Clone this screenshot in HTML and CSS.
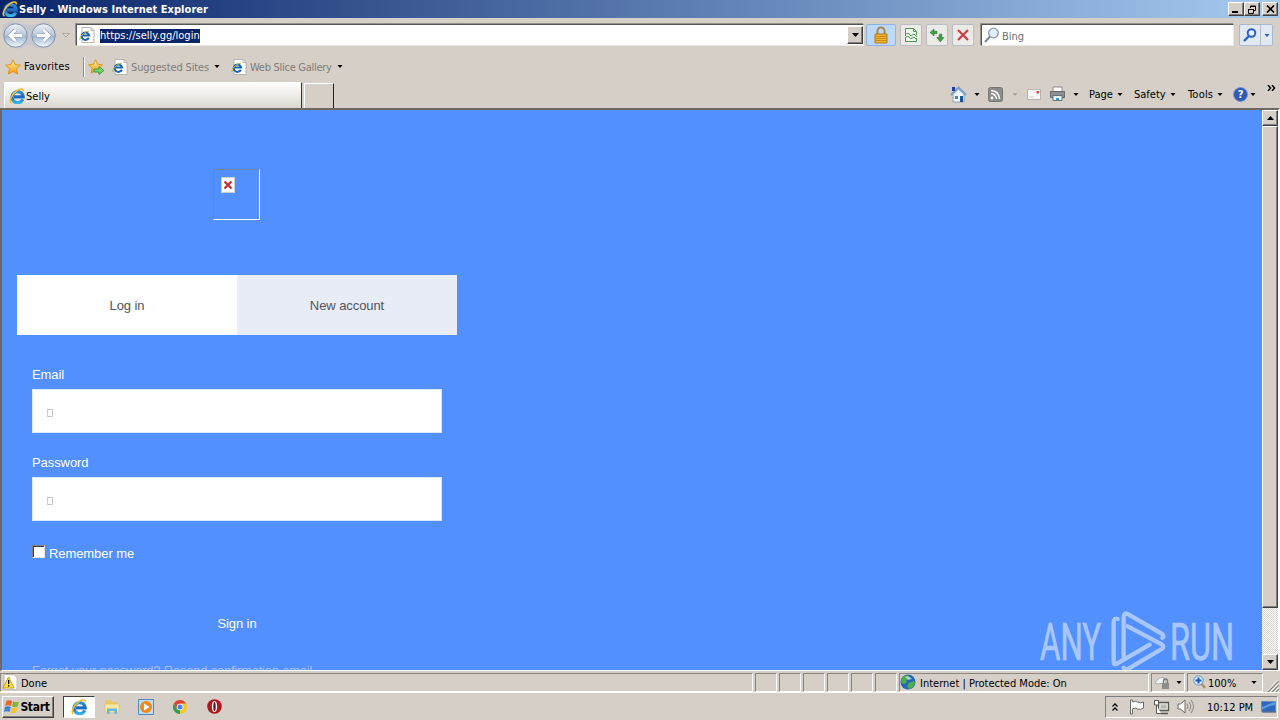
FILE: index.html
```html
<!DOCTYPE html>
<html lang="en">
<head>
  <meta charset="UTF-8">
  <meta name="viewport" content="width=device-width, initial-scale=1.0">
  <title>Selly</title>
  <link rel="stylesheet" href="styles.css">
</head>
<body>
  <!-- Shared icons -->
  <svg class="defs" width="0" height="0">
    <defs>
      <linearGradient id="ball" x1="0" y1="0" x2="0" y2="1">
        <stop offset="0" stop-color="#eef1f5"/>
        <stop offset=".45" stop-color="#bccbdc"/>
        <stop offset=".55" stop-color="#a3b8d0"/>
        <stop offset="1" stop-color="#f0faff"/>
      </linearGradient>
      <linearGradient id="gold" x1="0" y1="0" x2="0" y2="1">
        <stop offset="0" stop-color="#fff3a0"/>
        <stop offset="1" stop-color="#f79a10"/>
      </linearGradient>
      <linearGradient id="sky" x1="0" y1="0" x2="0" y2="1">
        <stop offset="0" stop-color="#2f8fdc"/>
        <stop offset=".5" stop-color="#1c68c0"/>
        <stop offset="1" stop-color="#38b4ec"/>
      </linearGradient>
      <symbol id="ie" viewBox="0 0 16 16">
        <path d="M13.800 11.300A5.600 5.600 0 1 1 14.200 8.800H5" fill="none" stroke="url(#sky)" stroke-width="3.200"/>
        <path d="M2.500 15C-1 14 3 5.500 8.500 2.300c3.500-2 6.500-1.500 5.800 1.200" fill="none" stroke="#f0c030" stroke-width="1.600"/>
      </symbol>
      <symbol id="ie-page" viewBox="0 0 16 16">
        <path d="M3 .5h9l3 3v12H3z" fill="#fff" stroke="#b4b4b0"/>
        <path d="M12 .5v3h3" fill="none" stroke="#b4b4b0"/>
        <path d="M9.800 10.800a3.700 3.700 0 1 1 .3-2.300H4" fill="none" stroke="#1d64b4" stroke-width="2"/>
        <path d="M1 13C0 11 4 5 10 4" fill="none" stroke="#a8b838" stroke-width="1"/>
      </symbol>
      <symbol id="star" viewBox="0 0 16 16">
        <path d="M8 .8l2.200 4.800 5.200.6-3.900 3.500 1.100 5.300L8 12.400 3.400 15l1.100-5.300L.6 6.200l5.200-.6z" fill="url(#gold)" stroke="#dc8c10" stroke-width=".9"/>
      </symbol>
      <symbol id="arrow" viewBox="0 0 7 4">
        <path d="M0 0h7L3.500 4z" fill="currentColor"/>
      </symbol>
    </defs>
  </svg>

  <header class="titlebar">
    <svg class="i16"><use href="#ie"/></svg>
    <h1>Selly - Windows Internet Explorer</h1>
    <div class="window-buttons">
      <button><svg width="10" height="8"><path d="M1 6h6v2H1z"/></svg></button>
      <button><svg width="10" height="9"><path d="M3.500 3V1h5v4.500h-2M3 1.500h6M1.500 4.500h5v4h-5zM1 4.500h6" fill="none" stroke="#000"/></svg></button>
      <button class="close"><svg width="9" height="8"><path d="M1 0.500l7 7M8 .5l-7 7" stroke="#000" stroke-width="1.6"/></svg></button>
    </div>
  </header>

  <div class="address-row">
    <svg class="travel" width="58" height="32" viewBox="0 0 58 32">
      <path d="M3 6Q8 2 15 3q7 3 14 3t14-3q9-1 13 9 2 12-10 17-9 2-17-4-8 6-17 4Q0 24 3 6z" fill="#c5c7ce"/>
      <circle cx="15.500" cy="16.500" r="11.700" fill="url(#ball)" stroke="#8594a6"/>
      <circle cx="43.500" cy="16.500" r="11.700" fill="url(#ball)" stroke="#8594a6"/>
      <path d="M22 16.500H10m5.500-5.500L10 16.500l5.500 5.500M37 16.500h12m-5.500-5.500L49 16.500l-5.500 5.500" fill="none" stroke="#8fa5bb" stroke-width="4"/>
      <path d="M22 16.500H10m5.500-5.500L10 16.500l5.500 5.500M37 16.500h12m-5.500-5.500L49 16.500l-5.500 5.500" fill="none" stroke="#fff" stroke-width="2.800"/>
    </svg>
    <svg class="recent" width="8" height="5"><path d="M.5.5h7L4 4z" fill="#d8d6d0" stroke="#aaa89f"/></svg>
    <div class="address">
      <svg class="i16"><use href="#ie-page"/></svg>
      <span class="url">https://selly.gg/login</span>
      <button class="drop"><svg class="arr"><use href="#arrow"/></svg></button>
    </div>
    <div class="tool lock">
      <svg width="16" height="18" viewBox="0 0 16 18">
        <path d="M4.500 8V5a3.500 3.500 0 0 1 7 0v3" fill="none" stroke="#a48a4a" stroke-width="2"/>
        <path d="M2 8h12v9H2z" fill="#efb52b" stroke="#b77c10"/>
        <path d="M2 10.500h12M2 12.500h12M2 14.500h12" stroke="#cb8c15"/>
      </svg>
    </div>
    <div class="tool">
      <svg width="14" height="16" viewBox="0 0 14 16">
        <path d="M1.500 9V1.500h8l3 3V8M1.500 11v3.500h11V11M9.500 1.500v3h3" fill="#eef8ee" stroke="#4b9a50"/>
        <path d="M1 8l3-2 3 3 3-2 3 3M1 11l3-2 3 3 3-2 2 2" fill="none" stroke="#4b9a50"/>
      </svg>
    </div>
    <div class="tool">
      <svg width="16" height="16" viewBox="0 0 16 16">
        <path d="M1 5.500L5 2v2.300h3v2.400H5V9zM15 10.500L11.300 15 7.800 10.500H10V8.300q0-1.600 2.800-1.300v3.500z" fill="#3f9e46" stroke="#2b7b35" stroke-width=".6"/>
      </svg>
    </div>
    <div class="tool">
      <svg width="12" height="12" viewBox="0 0 12 12"><path d="M1 1l10 10M11 1L1 11" stroke="#cf3d42" stroke-width="2.200"/></svg>
    </div>
    <div class="search">
      <svg width="16" height="16" viewBox="0 0 16 16">
        <circle cx="9.500" cy="6" r="4.800" fill="#dfeefa" stroke="#8a98a8" stroke-width="1.300"/>
        <path d="M6 9.500L1 15" stroke="#7c8794" stroke-width="2"/>
      </svg>
      <span>Bing</span>
    </div>
    <div class="go">
      <svg width="14" height="14" viewBox="0 0 14 14">
        <circle cx="8.500" cy="5" r="3.800" fill="#e6f3ff" stroke="#2c5fc4" stroke-width="2"/>
        <path d="M6 8l-5 5" stroke="#2c5fc4" stroke-width="2.400"/>
      </svg>
      <svg class="arr small blue"><use href="#arrow"/></svg>
    </div>
  </div>

  <nav class="favorites">
    <svg class="i16"><use href="#star"/></svg>
    <span class="fav">Favorites</span>
    <svg class="i16 add" viewBox="0 0 16 16">
      <use href="#star" width="15" height="15"/>
      <path d="M6 10h5V7.500l4.800 4-4.800 4V13H6z" fill="#7ed36a" stroke="#29973c" stroke-width=".9"/>
    </svg>
    <svg class="i16 page"><use href="#ie-page"/></svg>
    <span class="site">Suggested Sites</span>
    <svg class="arr small"><use href="#arrow"/></svg>
    <svg class="i16 page"><use href="#ie-page"/></svg>
    <span class="site slice">Web Slice Gallery</span>
    <svg class="arr small"><use href="#arrow"/></svg>
  </nav>

  <div class="tab-row">
    <div class="tab">
      <svg class="i16"><use href="#ie"/></svg>
      <span>Selly</span>
    </div>
    <div class="new-tab"></div>
    <div class="commands">
      <svg class="home" width="17" height="17" viewBox="0 0 17 17">
        <path d="M3 8v8h11V8L8.500 3z" fill="#f0f5fb" stroke="#8aa0bd"/>
        <path d="M1 9l7.500-7.500L16 9" fill="none" stroke="#7d9fca" stroke-width="2"/>
        <path d="M2 1h3v4H2z" fill="#223c9e"/>
        <path d="M10 10h3v6h-3z" fill="#1c5797"/>
        <path d="M5 10h3v3H5z" fill="#4f86bd"/>
      </svg>
      <svg class="arr small"><use href="#arrow"/></svg>
      <svg class="rss" width="15" height="15" viewBox="0 0 15 15">
        <rect x=".5" y=".5" width="14" height="14" rx="2" fill="#8c8c8a" stroke="#767674"/>
        <circle cx="4" cy="11" r="1.400" fill="#fff"/>
        <path d="M3 6.500Q8 7 8.500 12M3 3.500Q11 4 11.500 12" fill="none" stroke="#fff" stroke-width="1.500"/>
      </svg>
      <svg class="arr small faded"><use href="#arrow"/></svg>
      <svg class="mail" width="14" height="11" viewBox="0 0 14 11">
        <path d="M.5.500h13v10H.5z" fill="#f7f6f4" stroke="#b6b4b0"/>
        <path d="M2 8h5" fill="none" stroke="#d5d3d0"/>
        <path d="M9.500 2h2.500v2.500H9.500z" fill="#d4454e"/>
      </svg>
      <svg class="printer" width="17" height="16" viewBox="0 0 17 16">
        <path d="M4 1h9v6H4z" fill="#fff" stroke="#888"/>
        <path d="M1.500 5.500h14v6h-14z" fill="#8e8f92" stroke="#68696d"/>
        <path d="M4 9.500h9v5H4z" fill="#e7f5fb" stroke="#66737d"/>
        <path d="M7 12h3v2H7z" fill="#4896cd"/>
      </svg>
      <svg class="arr small"><use href="#arrow"/></svg>
      <span class="cmd page-cmd">Page</span>
      <svg class="arr small"><use href="#arrow"/></svg>
      <span class="cmd safety">Safety</span>
      <svg class="arr small"><use href="#arrow"/></svg>
      <span class="cmd tools">Tools</span>
      <svg class="arr small"><use href="#arrow"/></svg>
      <div class="help">?</div>
      <svg class="arr small last"><use href="#arrow"/></svg>
      <svg class="more" width="9" height="6"><path d="M1 0l2.500 3L1 6M5 0l2.500 3L5 6" fill="none" stroke="#000" stroke-width="1.500"/></svg>
    </div>
  </div>

  <div class="viewport">
    <main>
      <div class="missing">
        <svg width="14" height="16"><path d="M0 0h14v16H0z" fill="#fff"/><path d="M.5.500h13v15H.5z" fill="none" stroke="#c8d0d8"/><path d="M3.500 4.500l7 7M10.500 4.500l-7 7" stroke="#cf2a2a" stroke-width="2.200"/></svg>
      </div>
      <div class="auth-tabs">
        <a class="active">Log in</a>
        <a>New account</a>
      </div>
      <form>
        <label>Email</label>
        <div class="field"><i></i></div>
        <label>Password</label>
        <div class="field"><i></i></div>
        <div class="remember"><span class="check"></span>Remember me</div>
        <div class="sign-in">Sign in</div>
        <p class="links"><a>Forgot your password?</a> <a>Resend confirmation email</a></p>
      </form>
    </main>
    <div class="scrollbar">
      <button><svg class="arr up"><use href="#arrow"/></svg></button>
      <div class="thumb"></div>
      <div class="track"></div>
      <button><svg class="arr"><use href="#arrow"/></svg></button>
    </div>
    <svg class="watermark" width="210" height="68" viewBox="0 0 210 68">
      <g fill="#fff">
        <text x="4" y="53" textLength="61" lengthAdjust="spacingAndGlyphs">ANY</text>
        <text x="134" y="53" textLength="64" lengthAdjust="spacingAndGlyphs">RUN</text>
      </g>
      <g class="play" transform="translate(71 0) scale(.3333)">
        <path d="M32 36Q20 32 20 46V164Q20 176 31 169L128 113"/>
        <path d="M50 150V32Q50 14 64 22L164 80Q174 88 166 92"/>
        <path d="M62 58L164 112Q174 119 164 126L62 186Q54 190 50 182"/>
      </g>
    </svg>
  </div>

  <div class="statusbar">
    <div class="pane done">
      <svg width="16" height="16" viewBox="0 0 16 16">
        <path d="M2 .5h10l3 3v12H2z" fill="#fff" stroke="#bbb"/>
        <path d="M6.500 3L12 14H1z" fill="#ffe23a" stroke="#c69c0e"/>
        <path d="M6 6h1.300v4H6zM6 11h1.300v1.500H6z"/>
      </svg>
      <span>Done</span>
    </div>
    <div class="pane slot"></div>
    <div class="pane slot"></div>
    <div class="pane slot"></div>
    <div class="pane slot"></div>
    <div class="pane slot"></div>
    <div class="pane slot"></div>
    <div class="pane zone">
      <svg width="16" height="16" viewBox="0 0 16 16">
        <circle cx="8" cy="8" r="7.500" fill="#2467b5"/>
        <path d="M2 4q4-4 7-2 0 3-3 4l1 2-3 2-3-1zM9 9l5-2 1 2q-2 6-6 6l-2-3z" fill="#4fae4b"/>
        <path d="M5 3q4-2 7 2l-4 1z" fill="#b6e2f4" opacity=".8"/>
      </svg>
      <span>Internet | Protected Mode: On</span>
    </div>
    <div class="pane privacy">
      <svg width="16" height="15" viewBox="0 0 16 15">
        <path d="M0 8Q4 1 9 3l2 5-8 1z" fill="#f6f6f4" stroke="#aaa"/>
        <path d="M8.500 8V6a2 2 0 0 1 4 0v2" fill="none" stroke="#777" stroke-width="1.300"/>
        <path d="M7 8h7v6H7z" fill="#8d8d8b"/>
      </svg>
      <svg class="arr small"><use href="#arrow"/></svg>
    </div>
    <div class="pane zoom">
      <svg width="13" height="14" viewBox="0 0 13 14">
        <path d="M8 8l4 5" stroke="#a78c61" stroke-width="2.200"/>
        <circle cx="5.500" cy="5.500" r="4.700" fill="#d7ebff" stroke="#5e93d2"/>
        <path d="M5.500 2.500v6M2.500 5.500h6" stroke="#2058bd" stroke-width="2"/>
      </svg>
      <span>100%</span>
      <svg class="arr small"><use href="#arrow"/></svg>
    </div>
    <svg class="grip" width="12" height="12"><path d="M1 12L12 1M5 12l7-7M9 12l3-3" stroke="#fff" stroke-width="3"/><path d="M1 12L12 1M5 12l7-7M9 12l3-3" stroke="#85827a" stroke-width="1.500"/></svg>
  </div>

  <footer class="taskbar">
    <button class="start">
      <svg width="16" height="15" viewBox="0 0 16 15">
        <path d="M2.500 2Q5 .5 8 2L7 7Q4 5.500 1.200 7z" fill="#e8622b"/>
        <path d="M9 2.500Q12 4 15 2.500L13.700 7.500Q11 9 8 7.500z" fill="#82b53b"/>
        <path d="M1 8Q4 6.500 6.800 8l-1.300 5Q3 11.500 0 13z" fill="#3f83d4"/>
        <path d="M7.800 8.500Q10.500 10 13.500 8.500L12 13.500Q9 15 6.500 13.500z" fill="#f8c22e"/>
      </svg>
      Start
    </button>
    <div class="task active"><svg class="i16"><use href="#ie"/></svg></div>
    <div class="task">
      <svg width="16" height="16" viewBox="0 0 16 16">
        <path d="M1 3l1-2h5l1 2h6v10H1z" fill="#e8c966"/>
        <path d="M1 5h14v8H1z" fill="#f9e9a0" stroke="#ddbe62" stroke-width=".6"/>
        <path d="M3 15V9.500h10V15h-2.500v-3h-5v3z" fill="#67b9e3"/>
      </svg>
    </div>
    <div class="task">
      <svg width="16" height="16" viewBox="0 0 16 16">
        <path d="M.5.500h15v15H.5z" fill="#bcdcf3" stroke="#4b8cc4"/>
        <circle cx="8" cy="8" r="6" fill="#f08a1c"/>
        <path d="M6 4.500l5.500 3.500L6 11.500z" fill="#fff"/>
      </svg>
    </div>
    <div class="task">
      <svg width="14" height="14" viewBox="0 0 14 14">
        <circle cx="7" cy="7" r="7" fill="#f7c927"/>
        <path d="M.9 3.500A7 7 0 0 1 13.100 3.500H7L4 8.700z" fill="#dc4437"/>
        <path d="M.9 3.500L4 8.700 7 10.500 7 14A7 7 0 0 1 .9 3.500z" fill="#2f9c58"/>
        <circle cx="7" cy="7" r="3.300" fill="#fff"/>
        <circle cx="7" cy="7" r="2.500" fill="#4482ec"/>
      </svg>
    </div>
    <div class="task">
      <svg width="15" height="15" viewBox="0 0 15 15">
        <circle cx="7.500" cy="7.500" r="7.300" fill="#b01820"/>
        <ellipse cx="7.500" cy="7.500" rx="2.700" ry="5.500" fill="#fff"/>
        <ellipse cx="7.500" cy="7.500" rx="1.200" ry="4.600" fill="#7f0c12"/>
      </svg>
    </div>
    <div class="tray">
      <svg width="6" height="8"><path d="M.5 3.500L3 1l2.500 2.500M.5 7.500L3 5l2.500 2.500" fill="none" stroke="#000" stroke-width="1.300"/></svg>
      <svg class="flag" width="16" height="16" viewBox="0 0 16 16">
        <path d="M1.500 1v14h2V10q3-2 5 0 3 1 6-1V3q-3 1.500-6 0-2-1.500-5 0V1z" fill="#fff" stroke="#6b6b68"/>
      </svg>
      <svg class="network" width="17" height="16" viewBox="0 0 17 16">
        <path d="M5.500 3.500h10v8h-10zM8 14.500h7" fill="#e6e6e3" stroke="#575754" stroke-width="1.300"/>
        <path d="M7.500 5.500h6v4h-6z" fill="#b9b9b4"/>
        <path d="M1.500 1.500h4V6h-4zM3.500 6v8.500H8" fill="#fff" stroke="#575754"/>
      </svg>
      <svg class="sound" width="17" height="15" viewBox="0 0 17 15">
        <path d="M1 5h2.500L8 1v13L3.500 10H1z" fill="#fff" stroke="#6b6b68"/>
        <path d="M10 5q2 2.500 0 5M12 3q3.500 4.500 0 9M14 1q5 6.500 0 13" fill="none" stroke="#858582"/>
      </svg>
      <span class="clock">10:12 PM</span>
      <svg class="desktop" width="15" height="12" viewBox="0 0 15 12">
        <path d="M.5.500h14v10H.5z" fill="#2c69bd" stroke="#6f8db4"/>
        <path d="M1 6Q7 3 14 1v3Q7 5 1 9z" fill="#5c9be0"/>
        <path d="M1 11h14" stroke="#324a70"/>
      </svg>
    </div>
  </footer>
</body>
</html>
```

FILE: styles.css
```css
* {
  box-sizing: border-box;
}

body {
  margin: 0;
  width: 1280px;
  height: 720px;
  overflow: hidden;
  display: flex;
  flex-direction: column;
  background: #d5cfc8;
  font-family: "DejaVu Sans Condensed", "DejaVu Sans", sans-serif;
  font-stretch: condensed;
  font-size: 11px;
  color: #000;
  white-space: nowrap;
}

svg {
  display: block;
  flex: none;
}

span {
  flex: none;
}

button {
  display: flex;
  align-items: center;
  justify-content: center;
  flex: none;
  padding: 0;
  font: inherit;
  background: #d5cfc8;
  border: 1px solid;
  border-color: #fff #404040 #404040 #fff;
  box-shadow: inset -1px -1px #808080;
}

.defs {
  position: absolute;
}

.i16 {
  width: 16px;
  height: 16px;
}

.arr {
  width: 7px;
  height: 4px;
}

.small {
  width: 6px;
  height: 3px;
}

.faded {
  color: #aaa69f;
}

.blue {
  color: #2c5fc4;
}

.up {
  transform: rotate(180deg);
}

/* Title bar */
.titlebar {
  height: 18px;
  flex: none;
  display: flex;
  align-items: center;
  padding: 0 2px;
  background: linear-gradient(to right, #0a246a, #a6caf0);
  color: #fff;
}

.titlebar h1 {
  margin: 0 0 0 1px;
  padding-top: 2px;
  font-size: 11px;
  line-height: 16px;
  letter-spacing: 0.04px;
}

.window-buttons {
  display: flex;
  margin-left: auto;
}

.window-buttons button {
  width: 16px;
  height: 14px;
}

.window-buttons .close {
  margin-left: 2px;
}

/* Address row */
.address-row {
  height: 34px;
  flex: none;
  display: flex;
  align-items: center;
}

.recent {
  margin: 0 6px 0 4px;
}

.address,
.search {
  display: flex;
  align-items: center;
  height: 22px;
  background: #fff;
  border: 1px solid;
  border-color: #555 #ece9e4 #ece9e4 #555;
  box-shadow: -1px -1px #96928a;
}

.address {
  width: 788px;
  padding-left: 2px;
}

.url {
  margin: 2px 0 0 5px;
  background: #0a246a;
  color: #fff;
  line-height: 14px;
}

.drop {
  width: 16px;
  height: 18px;
  margin-left: auto;
}

.tool {
  display: flex;
  align-items: center;
  justify-content: center;
  flex: none;
  width: 22px;
  height: 22px;
  margin-left: 4px;
  background: #edebe8;
  border: 1px solid #b9bdc4;
  border-radius: 2px;
}

.lock {
  width: 30px;
  margin-left: 2px;
  background: #bcd8fa;
  border-color: #8db4e6;
}

.search {
  width: 253px;
  margin-left: 7px;
  padding-left: 2px;
  color: #6d6d6d;
}

.search span {
  margin: 2px 0 0 2px;
}

.go {
  display: flex;
  align-items: center;
  width: 34px;
  height: 22px;
  margin-left: 5px;
  padding-left: 3px;
  background: linear-gradient(to right, transparent 20px, #b0bdd0 20px, #b0bdd0 21px, transparent 21px), #e3e9f1;
  border: 1px solid #a9b9cf;
  border-radius: 2px;
}

.go .arr {
  margin-left: 7px;
}

/* Favorites bar */
.favorites {
  height: 29px;
  flex: none;
  display: flex;
  align-items: center;
  padding-left: 5px;
}

.fav {
  width: 60px;
  margin-left: 3px;
  line-height: 20px;
  letter-spacing: 0.12px;
  border-right: 1px solid #8f8b84;
  box-shadow: 1px 0 #fff;
}

.add {
  margin-left: 4px;
}

.page {
  margin-left: 8px;
}

.favorites .arr + .page {
  margin-left: 11px;
}

.site {
  width: 79px;
  margin: 1px 4px 0 3px;
  color: #7f7c77;
  letter-spacing: -0.12px;
}

.slice {
  width: 83px;
  letter-spacing: -0.28px;
}

/* Tabs and command bar */
.tab-row {
  height: 27px;
  flex: none;
  display: flex;
  align-items: flex-end;
  padding-left: 4px;
}

.tab {
  display: flex;
  align-items: center;
  gap: 1px;
  width: 298px;
  height: 26px;
  padding: 1px 0 0 4px;
  background: linear-gradient(#fdfdfc, #eeece8 50%, #dad5ce);
  border: 1px solid #fff;
  border-right: 1px solid #333;
  border-bottom: 0;
}

.new-tab {
  width: 30px;
  height: 25px;
  margin-left: 2px;
  border: 1px solid #fff;
  border-right: 1px solid #222;
  border-bottom: 0;
}

.commands {
  display: flex;
  align-items: center;
  width: 330px;
  height: 28px;
  margin-left: auto;
}

.commands .arr {
  margin-left: 7px;
}

.commands .cmd + .arr {
  margin-left: 3px;
}

.rss {
  margin-left: 8px;
}

.commands .rss + .arr {
  margin-left: 9px;
}

.mail {
  margin-left: 9px;
}

.printer {
  margin-left: 8px;
}

.cmd {
  margin-left: 11px;
}

.page-cmd {
  width: 25px;
  margin-left: 10px;
}

.safety {
  width: 33px;
}

.tools {
  width: 26px;
  margin-left: 12px;
  letter-spacing: 0.2px;
}

.help {
  width: 15px;
  height: 15px;
  margin-left: 10px;
  border-radius: 50%;
  background: #2e59b4;
  border: 1px solid #7e9ad4;
  color: #fff;
  font-weight: bold;
  line-height: 13px;
  text-align: center;
}

.commands .last {
  margin-left: 2px;
}

.more {
  margin: 0 0 13px 11px;
}

/* Page content */
.viewport {
  position: relative;
  display: flex;
  height: 563px;
  flex: none;
  border: 2px solid;
  border-color: #6d6a66 #fff #fff #6d6a66;
  border-bottom-width: 1px;
}

main {
  flex: 1;
  overflow: hidden;
  padding-left: 15px;
  background: #528fff;
  color: #fff;
  font-family: "Liberation Sans", Arial, sans-serif;
  font-stretch: normal;
  font-size: 13px;
  letter-spacing: -0.08px;
}

.missing {
  width: 47px;
  height: 51px;
  margin: 59px 0 0 196px;
  padding: 7px;
  border: 1px solid;
  border-color: #7085ad #fff #fff #7085ad;
}

.auth-tabs {
  display: flex;
  width: 440px;
  margin-top: 55px;
}

.auth-tabs a {
  flex: 1;
  height: 60px;
  line-height: 62px;
  text-align: center;
  background: #e8ecf7;
  color: #51545b;
}

.auth-tabs .active {
  background: #fff;
}

form {
  width: 410px;
  margin: 32px 0 0 15px;
}

label {
  display: block;
  height: 22px;
  line-height: 16px;
}

.field {
  height: 44px;
  margin-bottom: 22px;
  padding: 19px 0 0 14px;
  background: #fff;
  border: 1px solid #dbe7fb;
}

.field i {
  display: block;
  width: 6px;
  height: 8px;
  border: 1px solid #c9c9c9;
}

.remember {
  display: flex;
  gap: 4px;
  margin-top: 24px;
  line-height: 18px;
}

.check {
  width: 13px;
  height: 13px;
  background: #fff;
  border: 1px solid;
  border-color: #808080 #e8e5df #e8e5df #808080;
  box-shadow: inset 1px 1px #404040;
}

.sign-in {
  margin-top: 53px;
  line-height: 16px;
  text-align: center;
}

.links {
  margin: 31px 0 0;
  line-height: 16px;
  letter-spacing: -0.22px;
  color: #a9bfe6;
}

.scrollbar {
  display: flex;
  flex-direction: column;
  width: 16px;
  background: repeating-conic-gradient(#fff 0 25%, #d5cfc8 0 50%) 0 0 / 2px 2px;
}

.scrollbar button {
  width: 16px;
  height: 16px;
}

.thumb {
  height: 482px;
  background: #d5cfc8;
  border: 1px solid;
  border-color: #fff #404040 #404040 #fff;
  box-shadow: inset -1px -1px #808080;
}

.track {
  flex: 1;
}

.watermark {
  position: absolute;
  left: 1034px;
  top: 497px;
  opacity: 0.5;
}

.watermark text {
  font-family: Roboto, sans-serif;
  font-stretch: normal;
  font-size: 51px;
  stroke: #fff;
  stroke-width: 0.7px;
}

.play {
  fill: none;
  stroke: #fff;
  stroke-width: 13;
  stroke-linecap: round;
}

/* Status bar */
.statusbar {
  display: flex;
  align-items: center;
  gap: 2px;
  height: 21px;
  flex: none;
  padding-top: 1px;
}

.pane {
  display: flex;
  align-items: center;
  flex: none;
  height: 19px;
  border: 1px solid;
  border-color: #8a867f #fff #fff #8a867f;
}

.pane span {
  padding-top: 2px;
}

.done {
  width: 753px;
  padding-left: 1px;
}

.done span {
  margin-left: 3px;
}

.zone span {
  margin-left: 4px;
}

.slot {
  width: 22px;
}

.zone {
  width: 250px;
}

.privacy {
  width: 34px;
  padding-left: 3px;
}

.privacy .arr {
  margin-left: 5px;
}

.zoom {
  width: 76px;
  padding-left: 5px;
}

.zoom span {
  width: 29px;
  margin-left: 2px;
}

.zoom .arr {
  margin-left: 14px;
}

.grip {
  margin: 7px 0 0 2px;
}

/* Taskbar */
.taskbar {
  display: flex;
  align-items: center;
  flex: 1;
  padding: 0 2px;
  border-top: 1px solid #fff;
}

.start {
  width: 52px;
  height: 22px;
  padding-right: 2px;
  font-weight: bold;
  font-size: 12px;
  letter-spacing: -0.3px;
}

.task {
  display: flex;
  align-items: center;
  justify-content: center;
  width: 32px;
  height: 22px;
  margin-left: 2px;
}

.task.active {
  margin-left: 9px;
  margin-right: -1px;
  background: #fff;
  border: 1px solid;
  border-color: #404040 #fff #fff #404040;
}

.tray {
  display: flex;
  align-items: center;
  width: 173px;
  height: 22px;
  margin-left: auto;
  padding-left: 6px;
  border: 1px solid;
  border-color: #808080 #fff #fff #808080;
}

.flag {
  margin-left: 11px;
}

.network {
  margin-left: 8px;
}

.sound {
  margin-left: 7px;
}

.clock {
  width: 46px;
  margin: 1px 0 0 13px;
}

.desktop {
  margin-left: 8px;
}
```
